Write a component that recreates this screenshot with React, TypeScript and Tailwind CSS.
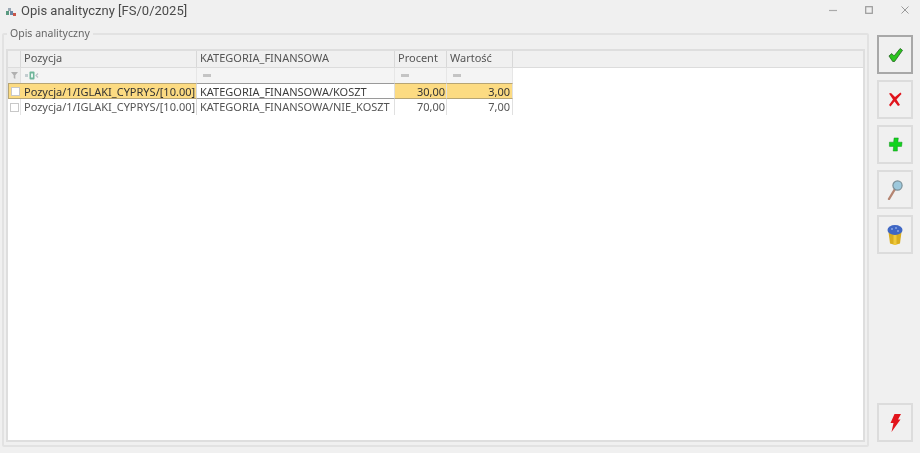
const rows = [
  { poz: 'Pozycja/1/IGLAKI_CYPRYS/[10.00]', kat: 'KATEGORIA_FINANSOWA/KOSZT', pr: '30,00', wa: '3,00', active: true },
  { poz: 'Pozycja/1/IGLAKI_CYPRYS/[10.00]', kat: 'KATEGORIA_FINANSOWA/NIE_KOSZT', pr: '70,00', wa: '7,00', active: false },
];

function Eq() {
  return <div className="w-[8px] h-[3px] bg-[#c4c4c4]" />;
}

function ActionButton({ children, className, focused }: { children: React.ReactNode; className?: string; focused?: boolean }) {
  return (
    <div className={`w-[36px] h-[39px] flex items-center justify-center border-2 ${focused ? 'border-[#a8a8a8]' : 'border-[#dcdcdc]'} ${className ?? ''}`}>
      {children}
    </div>
  );
}

export default function App() {
  return (
    <div className="w-[920px] h-[453px] bg-[#f0f0f0] flex flex-col overflow-hidden blur-[0.4px] font-['Noto_Sans',sans-serif] text-[#555]">
      {/* Title bar */}
      <div className="h-[27px] shrink-0 flex items-start pl-[6px] pr-[11px] pt-[2px]">
        <svg className="w-[10px] h-[9px] mt-[6px]" viewBox="0 0 10 9">
          <rect x="2" y="0" width="3" height="3" fill="#9aa8b4" />
          <rect x="0" y="3" width="3" height="4" fill="#5a9a80" />
          <rect x="4" y="3" width="3" height="4" fill="#6a88a6" />
          <rect x="7" y="5" width="3" height="3" fill="#c9564a" />
        </svg>
        <span className="ml-[5px] text-[13px] leading-[18px] text-[#4a4a4a] font-['Roboto',sans-serif]">Opis analityczny [FS/0/2025]</span>
        <div className="ml-auto flex items-center gap-[28px] mt-[4px]">
          <svg className="w-[8px] h-[8px]" viewBox="0 0 8 8"><path d="M0 4.5H8" stroke="#aaa" strokeWidth="1.2" /></svg>
          <svg className="w-[8px] h-[8px]" viewBox="0 0 8 8"><rect x="0.7" y="0.7" width="6.6" height="6.6" fill="none" stroke="#999" strokeWidth="1.2" /></svg>
          <svg className="w-[8px] h-[8px]" viewBox="0 0 8 8"><path d="M0.5 0.5L7.5 7.5M7.5 0.5L0.5 7.5" stroke="#999" strokeWidth="1" /></svg>
        </div>
      </div>

      <div className="flex-1 min-h-0 flex pl-[2px] pr-[7px] pb-[6px] gap-[8px]">
        {/* Group box */}
        <fieldset className="w-[867px] h-[420px] border-2 border-[#e2e2e2] rounded-[2px] px-[2px] pb-[3px] min-w-0 flex flex-col">
          <legend className="ml-[1px] px-[3px] text-[10.5px] leading-[14px] text-[#666] -translate-y-[1px]">Opis analityczny</legend>
          <div className="mt-[8px] flex-1 min-h-0 bg-white border-2 border-[#dedede] flex flex-col text-[11px]">
            {/* Header */}
            <div className="h-[17px] shrink-0 bg-[#f0f0f0] flex border-b border-[#dcdcdc]">
              <div className="w-[13px] border-r border-[#d8d8d8]" />
              <div className="w-[176px] border-r border-[#d8d8d8] pl-[3px] leading-[14px]">Pozycja</div>
              <div className="w-[198px] border-r border-[#d8d8d8] pl-[3px] leading-[14px]">KATEGORIA_FINANSOWA</div>
              <div className="w-[52px] border-r border-[#d8d8d8] pl-[3px] leading-[14px]">Procent</div>
              <div className="w-[66px] border-r border-[#d8d8d8] pl-[3px] leading-[14px]">Wartość</div>
              <div className="flex-1" />
            </div>
            {/* Filter row */}
            <div className="h-[15px] shrink-0 flex">
              <div className="w-[13px] bg-[#ececec] flex items-center justify-center border-r border-[#e0e0e0]">
                <svg className="w-[7px] h-[7px]" viewBox="0 0 7 7"><path d="M0 0H7L4.3 3.2V7L2.7 6V3.2Z" fill="#b0b0b0" /></svg>
              </div>
              <div className="w-[176px] bg-[#f4f4f4] flex items-center pl-[4px] gap-[1px] border-r border-[#e6e6e6]">
                <svg className="w-[14px] h-[9px]" viewBox="0 0 14 9">
                  <rect x="0" y="3" width="3" height="3" fill="#c3cdd0" />
                  <rect x="4.5" y="0.5" width="5" height="8" rx="1" fill="#6fb59a" />
                  <rect x="6" y="2.5" width="2" height="4" fill="#e8f4ef" />
                  <path d="M13 2.5L11 4.5L13 6.5" fill="none" stroke="#b8c0c4" strokeWidth="1.2" />
                </svg>
              </div>
              {[198, 52, 66].map((w) => (
                <div key={w} style={{ width: w }} className="bg-[#f4f4f4] flex items-center pl-[6px] border-r border-[#e6e6e6]">
                  <Eq />
                </div>
              ))}
            </div>
            {/* Rows */}
            {rows.map((r) => (
              <div key={r.kat} className={`h-[16px] shrink-0 flex leading-[16px] ${r.active ? 'text-[#3d3d3d]' : ''}`}>
                <div className={`w-[13px] flex items-center justify-center ${r.active ? 'bg-[#fcdb82] border-y border-l border-[#b7a574]' : 'border-r border-[#e4e4e4]'}`}>
                  <div className="w-[9px] h-[9px] bg-white border border-[#c8c8c8]" />
                </div>
                <div className={`w-[176px] pl-[3px] border-r border-[#d8d8d8] ${r.active ? 'bg-[#fcdb82] border-y border-y-[#b7a574] leading-[15px] text-[#333]' : ''}`}>{r.poz}</div>
                <div className={`w-[198px] pl-[3px] border-r border-[#e0e0e0] ${r.active ? 'bg-white border-y border-y-[#9a9a9a] leading-[15px]' : ''}`}>{r.kat}</div>
                <div className={`w-[52px] text-right pr-[1px] border-r border-[#e0e0e0] ${r.active ? 'bg-[#fcdb82] border-y border-y-[#b7a574] leading-[15px] text-[#333]' : ''}`}>{r.pr}</div>
                <div className={`w-[66px] text-right pr-[2px] border-r border-[#e0e0e0] ${r.active ? 'bg-[#fcdb82] border-y border-y-[#b7a574] leading-[15px] text-[#333]' : ''}`}>{r.wa}</div>
              </div>
            ))}
          </div>
        </fieldset>

        {/* Action buttons */}
        <div className="flex flex-col gap-[6px] pt-[8px] pb-[5px]">
          <ActionButton focused>
            <svg className="w-[15px] h-[14px]" viewBox="0 0 16 15"><path d="M1 8.5L4 6L6.5 8.5L13 0.5L15.5 2.5L7 14.5H5Z" fill="#2bc41f" stroke="#1c5b1a" strokeWidth="0.8" /></svg>
          </ActionButton>
          <ActionButton>
            <svg className="w-[14px] h-[15px]" viewBox="0 0 14 15"><path d="M1 1.5L3 1L7 5L12.5 0.5L13.5 2L8.5 7.5L12 13L10 14L6.5 9.5L2.5 14.5L1 13L5 7.5Z" fill="#e0141c" /></svg>
          </ActionButton>
          <ActionButton>
            <svg className="w-[15px] h-[15px]" viewBox="0 0 15 16"><path d="M6 1H10.5L10 5.5H14.5L14 10H9.5V15H5L5.5 10H1V5.5H5.5Z" fill="#12d41e" stroke="#0b8a15" strokeWidth="0.5" /></svg>
          </ActionButton>
          <ActionButton>
            <svg className="w-[16px] h-[20px]" viewBox="0 0 16 20">
              <path d="M8 9L2 19" stroke="#b58572" strokeWidth="2.4" strokeLinecap="round" />
              <circle cx="10.5" cy="5.5" r="4.6" fill="#9cc8dc" stroke="#7a8f98" strokeWidth="1.2" />
            </svg>
          </ActionButton>
          <ActionButton>
            <svg className="w-[16px] h-[20px]" viewBox="0 0 16 20">
              <path d="M1.5 7H14.5L13 18.5Q8 20.5 3 18.5Z" fill="#d9ad1f" />
              <path d="M8 10V20" stroke="#efc93c" strokeWidth="3" />
              <ellipse cx="8" cy="5" rx="7.5" ry="5" fill="#3f67c4" />
              <circle cx="5" cy="4" r="1" fill="#8aa5e6" />
              <circle cx="9" cy="3" r="1" fill="#8aa5e6" />
              <circle cx="11" cy="6" r="1" fill="#8aa5e6" />
            </svg>
          </ActionButton>
          <ActionButton className="mt-auto">
            <svg className="w-[11px] h-[18px]" viewBox="0 0 11 18"><path d="M4.5 0H11L8 5.5H10.5L1.5 18L3.5 9H0.5Z" fill="#e2141c" /></svg>
          </ActionButton>
        </div>
      </div>
    </div>
  );
}
